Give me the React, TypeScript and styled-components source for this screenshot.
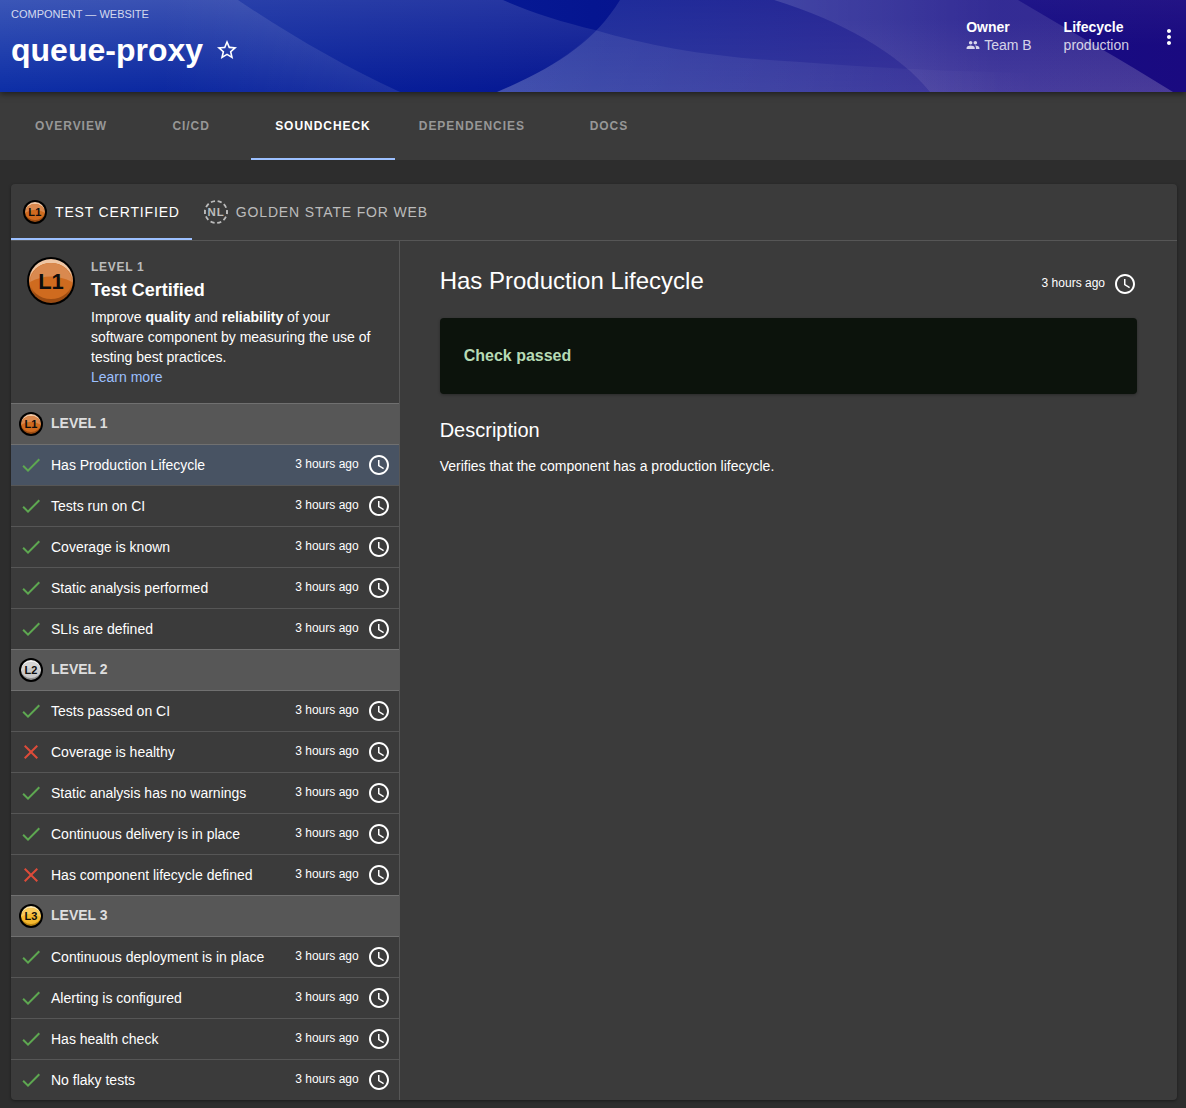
import React, { useState } from 'react';
import styled, { createGlobalStyle } from 'styled-components';

const GlobalStyle = createGlobalStyle`
  *, *::before, *::after { box-sizing: border-box; }
  body {
    margin: 0;
    background: #2d2d2d;
    color: #fff;
    font-family: "Liberation Sans", Arial, sans-serif;
    font-size: 14px;
    line-height: 20px;
  }
  h1, h2, h3, p, ul, dl, dd { margin: 0; padding: 0; }
  button { font: inherit; color: inherit; background: none; border: 0; padding: 0; cursor: pointer; }
  a { text-decoration: none; }
`;

/* ---------- icons ---------- */

const Icon = styled.svg<{ $size?: number; $color?: string }>`
  display: block;
  flex: none;
  width: ${p => p.$size ?? 24}px;
  height: ${p => p.$size ?? 24}px;
  fill: ${p => p.$color ?? 'currentColor'};
`;

const ClockIcon = () => (
  <Icon viewBox="0 0 24 24" aria-hidden="true">
    <path d="M11.99 2C6.47 2 2 6.48 2 12s4.47 10 9.99 10C17.52 22 22 17.52 22 12S17.52 2 11.99 2zM12 20c-4.42 0-8-3.58-8-8s3.58-8 8-8 8 3.58 8 8-3.58 8-8 8z" />
    <path d="M12.5 7H11v6l5.25 3.15.75-1.23-4.5-2.67z" />
  </Icon>
);

const CheckIcon = () => (
  <Icon viewBox="0 0 24 24" $color="#5ea851" role="img" aria-label="Passed">
    <path d="M9 16.17 4.83 12l-1.42 1.41L9 19 21 7l-1.41-1.41z" />
  </Icon>
);

const CrossIcon = () => (
  <Icon viewBox="0 0 24 24" $color="#dd4b39" role="img" aria-label="Failed">
    <path d="M19 6.41 17.59 5 12 10.59 6.41 5 5 6.41 10.59 12 5 17.59 6.41 19 12 13.41 17.59 19 19 17.59 13.41 12z" />
  </Icon>
);

const StarIcon = () => (
  <Icon viewBox="0 0 24 24" aria-hidden="true">
    <path d="m22 9.24-7.19-.62L12 2 9.19 8.63 2 9.24l5.46 4.73L5.82 21 12 17.27 18.18 21l-1.63-7.03L22 9.24zM12 15.4l-3.76 2.27 1-4.28-3.32-2.88 4.38-.38L12 6.1l1.71 4.04 4.38.38-3.32 2.88 1 4.28L12 15.4z" />
  </Icon>
);

const PeopleIcon = () => (
  <Icon viewBox="0 0 24 24" $size={14} aria-hidden="true">
    <path d="M16 11c1.66 0 2.99-1.34 2.99-3S17.66 5 16 5s-3 1.34-3 3 1.34 3 3 3zm-8 0c1.66 0 2.99-1.34 2.99-3S9.66 5 8 5 5 6.34 5 8s1.34 3 3 3zm0 2c-2.33 0-7 1.17-7 3.5V19h14v-2.5c0-2.33-4.67-3.5-7-3.5zm8 0c-.29 0-.62.02-.97.05 1.16.84 1.97 1.97 1.97 3.45V19h6v-2.5c0-2.33-4.67-3.5-7-3.5z" />
  </Icon>
);

const MoreIcon = () => (
  <Icon viewBox="0 0 24 24" aria-hidden="true">
    <path d="M12 8c1.1 0 2-.9 2-2s-.9-2-2-2-2 .9-2 2 .9 2 2 2zm0 2c-1.1 0-2 .9-2 2s.9 2 2 2 2-.9 2-2-.9-2-2-2zm0 6c-1.1 0-2 .9-2 2s.9 2 2 2 2-.9 2-2-.9-2-2-2z" />
  </Icon>
);

const BadgeText = styled.text`
  font-family: "Liberation Sans", Arial, sans-serif;
  font-weight: 700;
  text-anchor: middle;
`;

type Level = 1 | 2 | 3;

const medal: Record<Level, { rim: string; top: string; base: string; low: string }> = {
  1: { rim: '#efc6a4', top: '#d9894f', base: '#cf6b1f', low: '#9c4c12' },
  2: { rim: '#f4f4f4', top: '#d6d6d6', base: '#c9c9c9', low: '#8f8f8f' },
  3: { rim: '#fbe6ae', top: '#f8ca5c', base: '#f5b92e', low: '#b98412' },
};

const LevelBadge = ({ level, size = 24 }: { level: Level; size?: number }) => {
  const c = medal[level];
  const r = size > 24 ? 22 : 20;
  const rx = r - 1;
  const ry = r - 4;
  const id = `medal-${level}-${size}`;
  return (
    <Icon viewBox="0 0 48 48" $size={size} aria-hidden="true">
      <defs>
        <linearGradient id={id} x1="0" y1="0" x2="0" y2="1">
          <stop offset="0.25" stopColor={c.rim} />
          <stop offset="0.5" stopColor={c.top} />
          <stop offset="0.6" stopColor={c.base} />
          <stop offset="0.8" stopColor={c.low} />
        </linearGradient>
      </defs>
      <circle cx="24" cy="24" r="24" fill="#000" />
      <circle cx="24" cy="24" r={r} fill={`url(#${id})`} />
      <ellipse cx="24" cy="24" rx={rx} ry={ry} fill={c.base} />
      <path d={`M${24 - rx} 25A${rx} ${ry + 1} 0 0 1 ${24 + rx} 25Q24 14 ${24 - rx} 25z`} fill={c.top} />
      <BadgeText x="24" y="32" fontSize="22" fill="#0d0d0d">{`L${level}`}</BadgeText>
    </Icon>
  );
};

const NoLevelBadge = () => (
  <Icon viewBox="0 0 24 24" aria-hidden="true">
    <circle cx="12" cy="12" r="11" fill="none" stroke="currentColor" strokeWidth="1.800" strokeDasharray="4.200 2.711" strokeDashoffset="2.100" />
    <rect x="1.500" y="8" width="20" height="8" fill="#3b3b3b" />
    <BadgeText x="12" y="16" fontSize="11.500" fill="currentColor">NL</BadgeText>
    <path d="M1 10v4M23 10v4" stroke="currentColor" strokeWidth="1.600" />
  </Icon>
);

/* ---------- header ---------- */

const Header = styled.header`
  position: relative;
  z-index: 1;
  display: flex;
  align-items: flex-start;
  justify-content: space-between;
  padding: 6px 5px 22px 11px;
  background: linear-gradient(90deg, #0a2ca5 0%, #061a95 40%, #051590 50%, #140d86 80%, #1a0a80 100%);
  box-shadow: 0 2px 6px rgba(0, 0, 0, 0.5);
`;

const Waves = styled.svg`
  position: absolute;
  inset: 0;
  width: 100%;
  height: 100%;
  z-index: -1;
`;

const Kind = styled.p`
  font-size: 11px;
  line-height: 16px;
  text-transform: uppercase;
  color: rgba(255, 255, 255, 0.8);
  margin-bottom: 8px;
`;

const TitleLine = styled.div`
  display: flex;
  align-items: center;
  gap: 12px;
`;

const PageTitle = styled.h1`
  font-size: 32px;
  line-height: 40px;
  font-weight: 700;
`;

const HeaderMeta = styled.div`
  display: flex;
  align-items: flex-start;
  padding-top: 12px;
  gap: 28px;
`;

const Facts = styled.dl`
  display: flex;
  gap: 32px;
  line-height: 18px;
`;

const FactName = styled.dt`
  font-weight: 700;
`;

const FactValue = styled.dd`
  color: rgba(255, 255, 255, 0.8);
`;

const TeamLink = styled.a`
  display: flex;
  align-items: center;
  gap: 4px;
  color: inherit;
`;

const IconButton = styled.button`
  display: block;
`;

const MenuButton = styled(IconButton)`
  margin-top: 7px;
`;

/* ---------- page tabs ---------- */

const PageTabs = styled.nav`
  display: flex;
  padding-left: 11px;
  background: #3b3b3b;
`;

const PageTab = styled.a<{ $active: boolean }>`
  min-width: 120px;
  padding: 24px 24px 22px;
  border-bottom: 2px solid ${p => (p.$active ? '#9cc0ff' : 'transparent')};
  color: ${p => (p.$active ? '#fff' : '#979797')};
  font-size: 12px;
  font-weight: 700;
  letter-spacing: 0.08em;
  text-align: center;
  text-transform: uppercase;
`;

/* ---------- card ---------- */

const Main = styled.main`
  padding: 24px 9px 8px 11px;
`;

const Card = styled.section`
  background: #3b3b3b;
  border-radius: 4px;
  box-shadow: 0 1px 3px rgba(0, 0, 0, 0.4);
`;

const TrackTabs = styled.div`
  display: flex;
  border-bottom: 1px solid #565656;
`;

const TrackTab = styled.button<{ $active: boolean }>`
  display: flex;
  align-items: center;
  gap: 8px;
  height: 56px;
  padding: 2px 12px 0;
  border-bottom: 2px solid ${p => (p.$active ? '#9cc0ff' : 'transparent')};
  color: ${p => (p.$active ? '#fff' : '#bcbcbc')};
  letter-spacing: 0.06em;
  text-transform: uppercase;
`;

const Columns = styled.div`
  display: grid;
  grid-template-columns: 1fr 2fr;
`;

const Side = styled.div`
  border-right: 1px solid #565656;
`;

const Summary = styled.div`
  display: flex;
  gap: 16px;
  padding: 16px;
`;

const Eyebrow = styled.p`
  font-size: 12px;
  font-weight: 700;
  letter-spacing: 0.06em;
  text-transform: uppercase;
  color: #bcbcbc;
`;

const SummaryTitle = styled.h2`
  font-size: 18px;
  line-height: 26px;
  margin-bottom: 4px;
`;

const LearnMore = styled.a`
  color: #9cc0ff;
`;

const LevelHeading = styled.h3`
  display: flex;
  align-items: center;
  gap: 8px;
  height: 42px;
  padding: 0 8px;
  border: solid #707070;
  border-width: 1px 0;
  background: #575757;
  color: #dedede;
  font-size: 14px;
`;

const LevelName = styled.span`
  padding-bottom: 2px;
`;

const CheckList = styled.ul`
  list-style: none;
`;

const CheckItem = styled.li`
  & + & { border-top: 1px solid #565656; }
`;

const CheckRow = styled.button<{ $selected: boolean }>`
  display: flex;
  align-items: center;
  gap: 8px;
  width: 100%;
  height: 40px;
  padding: 0 8px;
  text-align: left;
  background: ${p => (p.$selected ? '#485363' : 'transparent')};
`;

const CheckName = styled.span`
  flex: 1;
`;

const Age = styled.span`
  display: flex;
  align-items: center;
  gap: 8px;
`;

const AgeText = styled.time`
  font-size: 12px;
  padding-bottom: 2px;
`;

const Detail = styled.article`
  padding: 24px 40px;
`;

const DetailHead = styled.div`
  display: flex;
  align-items: flex-end;
  justify-content: space-between;
  padding-bottom: 22px;
`;

const DetailTitle = styled.h2`
  font-size: 24px;
  line-height: 31px;
  font-weight: 400;
`;

const Banner = styled.p`
  padding: 28px 24px;
  border-radius: 4px;
  background: #0c130c;
  box-shadow: 0 1px 3px rgba(0, 0, 0, 0.3);
  color: #b6dab5;
  font-size: 16px;
  font-weight: 700;
`;

const DetailSubtitle = styled.h3`
  margin: 24px 0 14px;
  font-size: 20px;
  line-height: 24px;
  font-weight: 400;
`;

/* ---------- data ---------- */

const pages = ['Overview', 'CI/CD', 'Soundcheck', 'Dependencies', 'Docs'];

const levels: { level: Level; checks: { name: string; failed?: boolean }[] }[] = [
  {
    level: 1,
    checks: [
      { name: 'Has Production Lifecycle' },
      { name: 'Tests run on CI' },
      { name: 'Coverage is known' },
      { name: 'Static analysis performed' },
      { name: 'SLIs are defined' },
    ],
  },
  {
    level: 2,
    checks: [
      { name: 'Tests passed on CI' },
      { name: 'Coverage is healthy', failed: true },
      { name: 'Static analysis has no warnings' },
      { name: 'Continuous delivery is in place' },
      { name: 'Has component lifecycle defined', failed: true },
    ],
  },
  {
    level: 3,
    checks: [
      { name: 'Continuous deployment is in place' },
      { name: 'Alerting is configured' },
      { name: 'Has health check' },
      { name: 'No flaky tests' },
    ],
  },
];

const CheckAge = () => (
  <Age>
    <AgeText>3 hours ago</AgeText>
    <ClockIcon />
  </Age>
);

const HeaderWaves = () => (
  <Waves viewBox="0 0 1186 92" preserveAspectRatio="none" aria-hidden="true">
    <defs>
      <linearGradient id="fade-left" x1="0" y1="0" x2="0" y2="1">
        <stop offset="0" stopColor="#fff" stopOpacity="0.2" />
        <stop offset="1" stopColor="#fff" stopOpacity="0.01" />
      </linearGradient>
      <linearGradient id="edge-left" x1="0" y1="0" x2="1" y2="0">
        <stop offset="0.4" stopColor="#fff" stopOpacity="0" />
        <stop offset="1" stopColor="#fff" stopOpacity="0.08" />
      </linearGradient>
      <linearGradient id="fade-mid" x1="0" y1="0" x2="0" y2="1">
        <stop offset="0" stopColor="#fff" stopOpacity="0.13" />
        <stop offset="1" stopColor="#fff" stopOpacity="0" />
      </linearGradient>
      <linearGradient id="bowl" x1="0" y1="0" x2="0" y2="1">
        <stop offset="0" stopColor="#fff" stopOpacity="0.1" />
        <stop offset="1" stopColor="#fff" stopOpacity="0.16" />
      </linearGradient>
      <linearGradient id="floor" x1="0" y1="0" x2="1" y2="0">
        <stop offset="0" stopColor="#fff" stopOpacity="0.1" />
        <stop offset="0.45" stopColor="#fff" stopOpacity="0.06" />
        <stop offset="0.8" stopColor="#fff" stopOpacity="0" />
      </linearGradient>
      <linearGradient id="slope" gradientUnits="userSpaceOnUse" x1="774" y1="0" x2="1000" y2="0">
        <stop offset="0" stopColor="#fff" stopOpacity="0.22" />
        <stop offset="1" stopColor="#fff" stopOpacity="0.13" />
      </linearGradient>
      <linearGradient id="slope-foot" x1="0" y1="0" x2="0" y2="1">
        <stop offset="0.2" stopColor="#ffe6f0" stopOpacity="0" />
        <stop offset="1" stopColor="#ffe6f0" stopOpacity="0.09" />
      </linearGradient>
      <linearGradient id="fade-right" x1="0" y1="0" x2="0" y2="1">
        <stop offset="0" stopColor="#fff" stopOpacity="0.04" />
        <stop offset="0.5" stopColor="#fff" stopOpacity="0" />
      </linearGradient>
    </defs>
    <path d="M0 0H238C290 35 345 67 400 92H0z" fill="url(#fade-left)" />
    <path d="M0 0H238C290 35 345 67 400 92H0z" fill="url(#edge-left)" />
    <path d="M238 0H503C530 12 562 22 595 30C570 56 540 74 497 92H400C345 67 290 35 238 0z" fill="url(#fade-mid)" />
    <path d="M620 0H774C840 20 900 54 930 92H497C556 67 594 42 620 0z" fill="url(#bowl)" />
    <path d="M595 30C655 48 720 58 800 62C870 67 960 74 1140 74L1173 92H497C540 74 570 56 595 30z" fill="url(#floor)" />
    <path d="M774 0H1018C1070 31 1122 60 1173 92H930C900 54 840 20 774 0z" fill="url(#slope)" />
    <path d="M774 0H1018C1070 31 1122 60 1173 92H930C900 54 840 20 774 0z" fill="url(#slope-foot)" />
    <path d="M1018 0H1186V92H1173C1122 60 1070 31 1018 0z" fill="url(#fade-right)" />
  </Waves>
);

export default function App() {
  const [selected, setSelected] = useState('Has Production Lifecycle');
  const [track, setTrack] = useState(0);
  const failed = levels.some(l => l.checks.some(c => c.name === selected && c.failed));

  return (
    <>
      <GlobalStyle />
      <Header>
        <HeaderWaves />
        <div>
          <Kind>component — website</Kind>
          <TitleLine>
            <PageTitle>queue-proxy</PageTitle>
            <IconButton type="button" aria-label="Add to favorites"><StarIcon /></IconButton>
          </TitleLine>
        </div>
        <HeaderMeta>
          <Facts>
            <div>
              <FactName>Owner</FactName>
              <FactValue><TeamLink href="#team-b"><PeopleIcon />Team B</TeamLink></FactValue>
            </div>
            <div>
              <FactName>Lifecycle</FactName>
              <FactValue>production</FactValue>
            </div>
          </Facts>
          <MenuButton type="button" aria-label="More"><MoreIcon /></MenuButton>
        </HeaderMeta>
      </Header>

      <PageTabs>
        {pages.map(p => (
          <PageTab key={p} href={`#${p.toLowerCase()}`} $active={p === 'Soundcheck'}>{p}</PageTab>
        ))}
      </PageTabs>

      <Main>
        <Card>
          <TrackTabs role="tablist">
            <TrackTab type="button" role="tab" aria-selected={track === 0} $active={track === 0} onClick={() => setTrack(0)}>
              <LevelBadge level={1} />
              Test Certified
            </TrackTab>
            <TrackTab type="button" role="tab" aria-selected={track === 1} $active={track === 1} onClick={() => setTrack(1)}>
              <NoLevelBadge />
              Golden State for Web
            </TrackTab>
          </TrackTabs>

          <Columns>
            <Side>
              <Summary>
                <LevelBadge level={1} size={48} />
                <div>
                  <Eyebrow>Level 1</Eyebrow>
                  <SummaryTitle>Test Certified</SummaryTitle>
                  <p>
                    Improve <strong>quality</strong> and <strong>reliability</strong> of your software
                    component by measuring the use of testing best practices.
                  </p>
                  <LearnMore href="#learn-more">Learn more</LearnMore>
                </div>
              </Summary>
              {levels.map(({ level, checks }) => (
                <section key={level}>
                  <LevelHeading>
                    <LevelBadge level={level} />
                    <LevelName>{`LEVEL ${level}`}</LevelName>
                  </LevelHeading>
                  <CheckList>
                    {checks.map(c => (
                      <CheckItem key={c.name}>
                        <CheckRow type="button" $selected={c.name === selected} onClick={() => setSelected(c.name)}>
                          {c.failed ? <CrossIcon /> : <CheckIcon />}
                          <CheckName>{c.name}</CheckName>
                          <CheckAge />
                        </CheckRow>
                      </CheckItem>
                    ))}
                  </CheckList>
                </section>
              ))}
            </Side>

            <Detail>
              <DetailHead>
                <DetailTitle>{selected}</DetailTitle>
                <CheckAge />
              </DetailHead>
              <Banner>{failed ? 'Check failed' : 'Check passed'}</Banner>
              <DetailSubtitle>Description</DetailSubtitle>
              <p>Verifies that the component has a production lifecycle.</p>
            </Detail>
          </Columns>
        </Card>
      </Main>
    </>
  );
}
